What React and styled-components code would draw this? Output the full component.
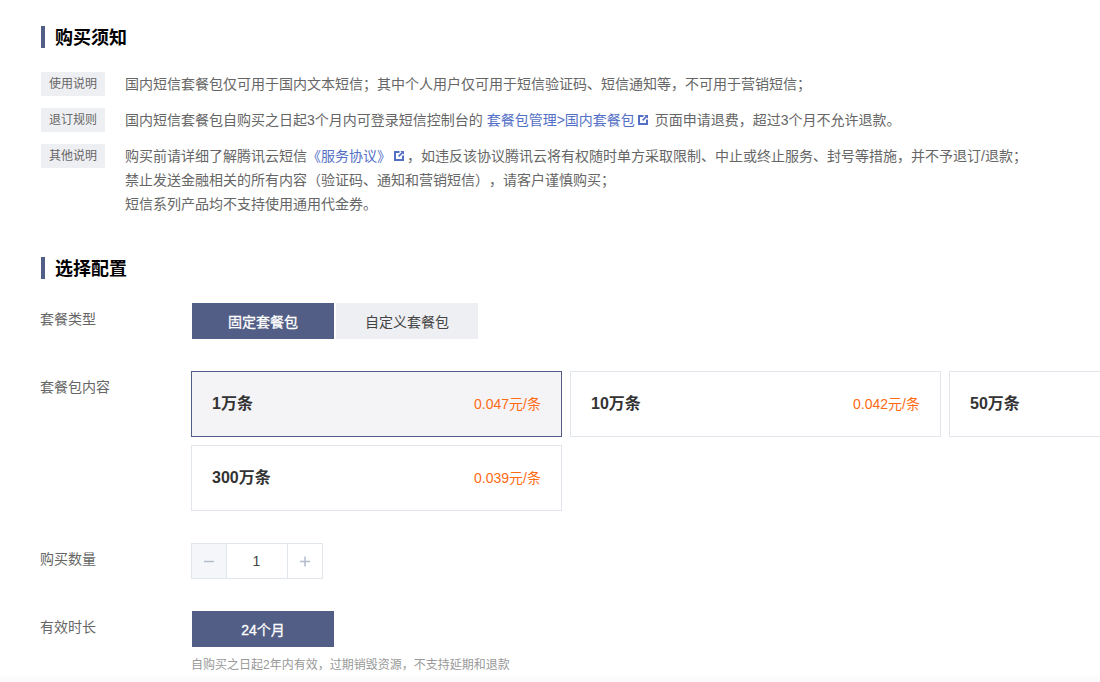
import React from 'react';
import styled, { createGlobalStyle } from 'styled-components';

const Global = createGlobalStyle`
  html, body { margin: 0; padding: 0; background: #fff; }
  body {
    font-family: "Liberation Sans", "Noto Sans CJK SC", sans-serif;
    overflow: hidden;
    text-spacing-trim: space-all;
  }
`;
const Page = styled.div`
  width: 1100px; height: 682px; overflow: hidden; position: relative;
  box-sizing: border-box; padding: 26px 0 0 41px;
  background: linear-gradient(#fff 674px, #fafafa 680px);
`;
const Heading = styled.h2`
  margin: 0; height: 22px; line-height: 24px; padding-left: 10px;
  border-left: 4px solid #525e85; font-size: 18px; font-weight: 700; color: #000;
`;
const Notices = styled.div`
  display: flex; flex-direction: column; gap: 12px; margin: 24px 0 41px;
`;
const Notice = styled.div` display: flex; align-items: flex-start; gap: 20px; `;
const Tag = styled.span`
  flex: none; width: 64px; height: 24px; line-height: 24px; text-align: center;
  background: #eeeff3; color: #666; font-size: 12px;
`;
const NoticeBody = styled.div` font-size: 14px; line-height: 24px; color: #666; white-space: nowrap; `;
const Anchor = styled.a` color: #5470c6; text-decoration: none; `;
const Ext = styled.svg` width: 12px; height: 12px; vertical-align: -1px; margin: 0 2px; `;
const Row = styled.div`
  display: flex; align-items: flex-start; margin-top: ${p => p.$top}px;
`;
const Label = styled.div`
  flex: none; width: 150px; font-size: 14px; color: #666; line-height: 18px; padding-top: 7px; margin-left: -1px; margin-right: 1px;
`;
const Options = styled.div` display: flex; gap: 2px; margin-left: 1px; `;
const OptionButton = styled.div`
  width: 142px; height: 36px; line-height: 38px; text-align: center; font-size: 14px;
  -webkit-text-stroke: ${p => p.$active ? '0.3px #fff' : '0'};
  background: ${p => p.$active ? '#525e85' : '#eeeff3'};
  color: ${p => p.$active ? '#fff' : '#444'};
`;
const Cards = styled.div`
  display: grid; grid-template-columns: repeat(3, 371px); gap: 8px; flex: none;
`;
const Card = styled.div`
  box-sizing: border-box; height: 66px; display: flex; align-items: center; justify-content: space-between;
  padding: 0 20px 2px;
  border: 1px solid ${p => p.$active ? '#525e85' : '#e1e6ed'};
  background: ${p => p.$active ? '#f4f4f6' : '#fff'};
`;
const CardName = styled.span` font-size: 16px; font-weight: 700; color: #333; margin-bottom: 2px; `;
const CardPrice = styled.span` font-size: 14px; color: #ff6a13; `;
const Stepper = styled.div` display: flex; height: 36px; `;
const StepButton = styled.div`
  box-sizing: border-box; width: 36px; height: 36px; border: 1px solid #e1e6ed;
  display: flex; align-items: center; justify-content: center;
  background: ${p => p.$muted ? '#f4f6fa' : '#fff'};
  svg { width: 12px; height: 12px; display: block; }
`;
const StepValue = styled.div`
  box-sizing: border-box; width: 60px; height: 36px; line-height: 35px; text-align: center; padding-right: 1px;
  border-top: 1px solid #e1e6ed; border-bottom: 1px solid #e1e6ed; font-size: 14px; color: #444;
`;
const Hint = styled.div` margin: 9px 0 0 0; font-size: 12px; line-height: 18px; color: #999; white-space: nowrap; `;
const Column = styled.div` display: flex; flex-direction: column; `;

const LinkIcon = () => (
  <Ext viewBox="0 0 12 12">
    <path d="M1 1h5.5v2H3v6h6V5.5h2V11H1z" fill="#5470c6" />
    <path d="M7.2 1H11v3.8L9.7 3.5 6.2 7 5 5.8 8.5 2.3z" fill="#5470c6" />
  </Ext>
);

export default function App() {
  return (
    <Page>
      <Global />
      <Heading>购买须知</Heading>
      <Notices>
        <Notice>
          <Tag>使用说明</Tag>
          <NoticeBody>国内短信套餐包仅可用于国内文本短信；其中个人用户仅可用于短信验证码、短信通知等，不可用于营销短信；</NoticeBody>
        </Notice>
        <Notice>
          <Tag>退订规则</Tag>
          <NoticeBody>国内短信套餐包自购买之日起3个月内可登录短信控制台的 <Anchor>套餐包管理&gt;国内套餐包<LinkIcon /></Anchor> 页面申请退费，超过3个月不允许退款。</NoticeBody>
        </Notice>
        <Notice>
          <Tag>其他说明</Tag>
          <NoticeBody>
            购买前请详细了解腾讯云短信<Anchor>《服务协议》<LinkIcon /></Anchor>，如违反该协议腾讯云将有权随时单方采取限制、中止或终止服务、封号等措施，并不予退订/退款；<br />
            禁止发送金融相关的所有内容（验证码、通知和营销短信），请客户谨慎购买；<br />
            短信系列产品均不支持使用通用代金券。
          </NoticeBody>
        </Notice>
      </Notices>
      <Heading>选择配置</Heading>
      <Row $top={24}>
        <Label>套餐类型</Label>
        <Options>
          <OptionButton $active>固定套餐包</OptionButton>
          <OptionButton>自定义套餐包</OptionButton>
        </Options>
      </Row>
      <Row $top={32}>
        <Label>套餐包内容</Label>
        <Cards>
          <Card $active><CardName>1万条</CardName><CardPrice>0.047元/条</CardPrice></Card>
          <Card><CardName>10万条</CardName><CardPrice>0.042元/条</CardPrice></Card>
          <Card><CardName>50万条</CardName></Card>
          <Card><CardName>300万条</CardName><CardPrice>0.039元/条</CardPrice></Card>
        </Cards>
      </Row>
      <Row $top={32}>
        <Label>购买数量</Label>
        <Stepper>
          <StepButton $muted>
            <svg viewBox="0 0 12 12"><path d="M1 6.5h10" stroke="#b4bccc" strokeWidth="1.5" /></svg>
          </StepButton>
          <StepValue>1</StepValue>
          <StepButton>
            <svg viewBox="0 0 12 12"><path d="M1 6.5h10M6 1.5v10" stroke="#b4bccc" strokeWidth="1.5" /></svg>
          </StepButton>
        </Stepper>
      </Row>
      <Row $top={32}>
        <Label>有效时长</Label>
        <Column>
          <Options>
            <OptionButton $active>24个月</OptionButton>
          </Options>
          <Hint>自购买之日起2年内有效，过期销毁资源，不支持延期和退款</Hint>
        </Column>
      </Row>
    </Page>
  );
}
